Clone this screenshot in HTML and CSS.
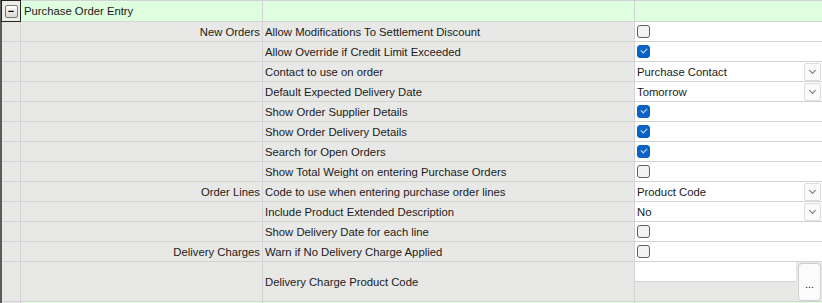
FILE: index.html
```html
<!DOCTYPE html>
<html lang="en">
<head>
  <meta charset="UTF-8">
  <title>Purchase Order Entry</title>
  <link rel="stylesheet" href="styles.css">
</head>
<body>
  <div class="grid">
    <!-- group header -->
    <div class="gutter group-exp"><span class="toggle">&minus;</span></div>
    <div class="group">Purchase Order Entry</div>
    <div class="group"></div>
    <div class="group"></div>

    <div class="gutter"></div>
    <div class="cat">New Orders</div>
    <div class="label">Allow Modifications To Settlement Discount</div>
    <div class="value"><span class="chk"></span></div>

    <div class="gutter"></div>
    <div class="cat"></div>
    <div class="label">Allow Override if Credit Limit Exceeded</div>
    <div class="value"><span class="chk on"></span></div>

    <div class="gutter"></div>
    <div class="cat"></div>
    <div class="label">Contact to use on order</div>
    <div class="value combo"><span>Purchase Contact</span><span class="drop"></span></div>

    <div class="gutter"></div>
    <div class="cat"></div>
    <div class="label">Default Expected Delivery Date</div>
    <div class="value combo"><span>Tomorrow</span><span class="drop"></span></div>

    <div class="gutter"></div>
    <div class="cat"></div>
    <div class="label">Show Order Supplier Details</div>
    <div class="value"><span class="chk on"></span></div>

    <div class="gutter"></div>
    <div class="cat"></div>
    <div class="label">Show Order Delivery Details</div>
    <div class="value"><span class="chk on"></span></div>

    <div class="gutter"></div>
    <div class="cat"></div>
    <div class="label">Search for Open Orders</div>
    <div class="value"><span class="chk on"></span></div>

    <div class="gutter"></div>
    <div class="cat"></div>
    <div class="label">Show Total Weight on entering Purchase Orders</div>
    <div class="value"><span class="chk"></span></div>

    <div class="gutter"></div>
    <div class="cat">Order Lines</div>
    <div class="label">Code to use when entering purchase order lines</div>
    <div class="value combo"><span>Product Code</span><span class="drop"></span></div>

    <div class="gutter"></div>
    <div class="cat"></div>
    <div class="label">Include Product Extended Description</div>
    <div class="value combo"><span>No</span><span class="drop"></span></div>

    <div class="gutter"></div>
    <div class="cat"></div>
    <div class="label">Show Delivery Date for each line</div>
    <div class="value"><span class="chk"></span></div>

    <div class="gutter"></div>
    <div class="cat">Delivery Charges</div>
    <div class="label">Warn if No Delivery Charge Applied</div>
    <div class="value"><span class="chk"></span></div>

    <div class="gutter"></div>
    <div class="cat"></div>
    <div class="label">Delivery Charge Product Code</div>
    <div class="value lookup">
      <div class="lookup-box">
        <span class="lookup-text"></span>
        <span class="lookup-rest"></span>
      </div>
      <span class="lookup-btn">...</span>
    </div>

    <div class="gutter"></div>
    <div class="group"></div>
    <div class="group"></div>
    <div class="group"></div>
  </div>
</body>
</html>
```

FILE: styles.css
```css
body {
  margin: 0;
  background: #fff;
  font-family: "Liberation Sans", Arial, sans-serif;
  font-size: 11.3px;
  color: #1b1b1b;
  overflow: hidden;
}
.grid {
  display: grid;
  grid-template-columns: 18px 241px 371px 187px;
  grid-template-rows: 20px repeat(12, 19px) 39px 1px;
  gap: 1px;
  padding: 1px 1px 0 0;
  background: #d3d3d3;
  border-left: 2px solid #5c5c5c;
}
.gutter {
  background: #e8e8e6;
}
.group-exp {
  background: #ecece9;
  outline: 1px solid #222;
  outline-offset: 0;
  display: flex;
  align-items: center;
  justify-content: center;
}
.toggle {
  width: 11px;
  height: 11px;
  border: 1px solid #7a7a7a;
  border-radius: 2px;
  background: linear-gradient(#ffffff, #d8d6cf);
  font-size: 11px;
  line-height: 10px;
  text-align: center;
  color: #000;
  font-weight: bold;
}
.group {
  background: #dffddf;
  display: flex;
  align-items: center;
  padding-left: 3px;
  white-space: nowrap;
}
.cat {
  background: #e8e8e6;
  display: flex;
  align-items: center;
  justify-content: flex-end;
  padding-right: 2px;
  white-space: nowrap;
}
.label {
  background: #e8e8e6;
  display: flex;
  align-items: center;
  padding-left: 2px;
  white-space: nowrap;
}
.value {
  background: #fff;
  display: flex;
  align-items: center;
  padding-left: 2px;
  white-space: nowrap;
}
.chk {
  box-sizing: border-box;
  width: 13px;
  height: 13px;
  border: 1px solid #5f5f5f;
  border-radius: 3px;
  background: #f3f3f3;
  position: relative;
}
.chk.on {
  border-color: #0a5fc0;
  background: #0a64c8;
}
.chk.on::after {
  content: "";
  position: absolute;
  left: 3px;
  top: 2px;
  width: 5px;
  height: 3px;
  border-left: 1px solid #cfe0f5;
  border-bottom: 1px solid #cfe0f5;
  transform: rotate(-45deg);
}
.combo {
  justify-content: space-between;
  padding-right: 1px;
}
.drop {
  box-sizing: border-box;
  width: 17px;
  height: 18px;
  border: 1px solid #dcdcdc;
  border-radius: 2px;
  background: #fafafa;
  position: relative;
}
.drop::after {
  content: "";
  position: absolute;
  left: 5px;
  top: 4px;
  width: 4px;
  height: 4px;
  border-right: 1px solid #777;
  border-bottom: 1px solid #777;
  transform: rotate(45deg);
}
.lookup {
  background: #e8e8e6;
  padding: 0;
  align-items: stretch;
}
.lookup-box {
  flex: 1;
  display: flex;
  flex-direction: column;
  gap: 1px;
  background: #d3d3d3;
}
.lookup-text {
  height: 19px;
  background: #fff;
}
.lookup-rest {
  flex: 1;
  background: #e8e8e6;
}
.lookup-btn {
  box-sizing: border-box;
  width: 23px;
  margin: 1px 1px 0 2px;
  border: 1px solid #cfcfcf;
  border-radius: 4px;
  background: #fbfbfb;
  display: flex;
  align-items: center;
  justify-content: center;
  font-size: 11px;
  padding-top: 4px;
  color: #222;
}
```
